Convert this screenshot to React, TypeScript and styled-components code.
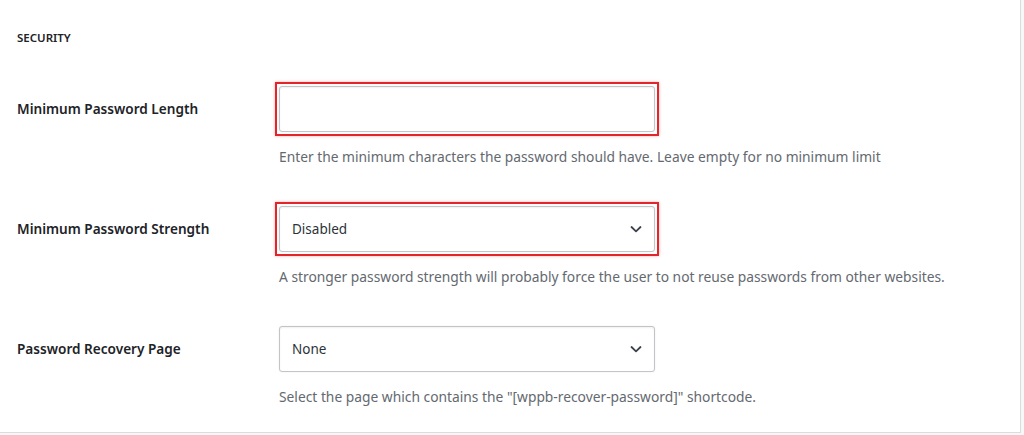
import React from "react";
import styled, { createGlobalStyle } from "styled-components";

const GlobalStyle = createGlobalStyle`
    html, body {
        margin: 0;
        padding: 0;
        background: #f6f7f7;
    }
    body {
        font-family: "Noto Sans", "Open Sans", sans-serif;
        color: #1d2327;
    }
`;

const Panel = styled.div`
    width: 1021px;
    height: 433px;
    box-sizing: border-box;
    background: #ffffff;
    border-right: 1px solid #dcdcde;
    border-bottom: 1px solid #dcdcde;
    padding: 30px 0 0 17px;
`;

const SectionHead = styled.h3`
    margin: 0 0 40px 0;
    font-size: 11.5px;
    line-height: 16px;
    font-weight: 600;
    color: #1d2327;
`;

const Rows = styled.div`
    display: flex;
    flex-direction: column;
    gap: 39px;
`;

const Row = styled.div`
    display: grid;
    grid-template-columns: 262px 376px 1fr;
    align-items: start;
`;

const Label = styled.label`
    font-size: 13.6px;
    font-weight: 600;
    line-height: 46px;
    color: #1d2327;
    white-space: nowrap;
`;

const Field = styled.div`
    display: flex;
    flex-direction: column;
    gap: 15px;
    width: 376px;
`;

// annotation frame drawn round the fields that are flagged in the screenshot
const Highlight = styled.div<{ $flagged?: boolean }>`
    position: relative;
    width: 376px;
    height: 46px;
    box-shadow: ${(p) =>
        p.$flagged
            ? "0 0 0 2px #ffffff, 0 0 0 4px #e1252b, 0 0 3px 4px rgba(225, 37, 43, 0.35)"
            : "none"};
`;

const boxStyles = `
    box-sizing: border-box;
    width: 376px;
    height: 46px;
    border: 1px solid #c3c4c7;
    border-radius: 3px;
    background: #ffffff;
    box-shadow: inset 0 1px 2px rgba(0, 0, 0, 0.06), 0 0 2px rgba(0, 0, 0, 0.08);
    font-family: "Noto Sans", "Open Sans", sans-serif;
    font-size: 13.5px;
    color: #2c3338;
    margin: 0;
    outline: none;
    display: block;
`;

const TextInput = styled.input`
    ${boxStyles}
    padding: 0 12px;
`;

const Select = styled.select`
    ${boxStyles}
    appearance: none;
    -webkit-appearance: none;
    padding: 0 40px 0 12px;
`;

const Chevron = styled.svg`
    position: absolute;
    right: 13px;
    top: 17px;
    pointer-events: none;
`;

const Description = styled.p`
    margin: 0;
    font-size: 13.8px;
    line-height: 20px;
    color: #646970;
    white-space: nowrap;
`;

function ChevronIcon() {
    return (
        <Chevron width="12" height="12" viewBox="0 0 12 12">
            <path d="M1.5 4 L6 8.3 L10.5 4" fill="none" stroke="#3c434a" strokeWidth="1.8" strokeLinecap="round" strokeLinejoin="round" />
        </Chevron>
    );
}

function SelectField(prop: { value: string; options: string[]; flagged?: boolean }) {
    return (
        <Highlight $flagged={prop.flagged}>
            <Select defaultValue={prop.value}>
                {prop.options.map((o) => (
                    <option key={o}>{o}</option>
                ))}
            </Select>
            <ChevronIcon />
        </Highlight>
    );
}

export default function App() {
    return (
        <>
            <GlobalStyle />
            <Panel>
                <SectionHead>SECURITY</SectionHead>
                <Rows>
                    <Row>
                        <Label>Minimum Password Length</Label>
                        <Field>
                            <Highlight $flagged>
                                <TextInput type="text" />
                            </Highlight>
                            <Description>
                                Enter the minimum characters the password should have. Leave empty for no minimum limit
                            </Description>
                        </Field>
                    </Row>
                    <Row>
                        <Label>Minimum Password Strength</Label>
                        <Field>
                            <SelectField value="Disabled" options={["Disabled", "Weak", "Medium", "Strong"]} flagged />
                            <Description>
                                A stronger password strength will probably force the user to not reuse passwords from other websites.
                            </Description>
                        </Field>
                    </Row>
                    <Row>
                        <Label>Password Recovery Page</Label>
                        <Field>
                            <SelectField value="None" options={["None"]} />
                            <Description>
                                Select the page which contains the "[wppb-recover-password]" shortcode.
                            </Description>
                        </Field>
                    </Row>
                </Rows>
            </Panel>
        </>
    );
}
